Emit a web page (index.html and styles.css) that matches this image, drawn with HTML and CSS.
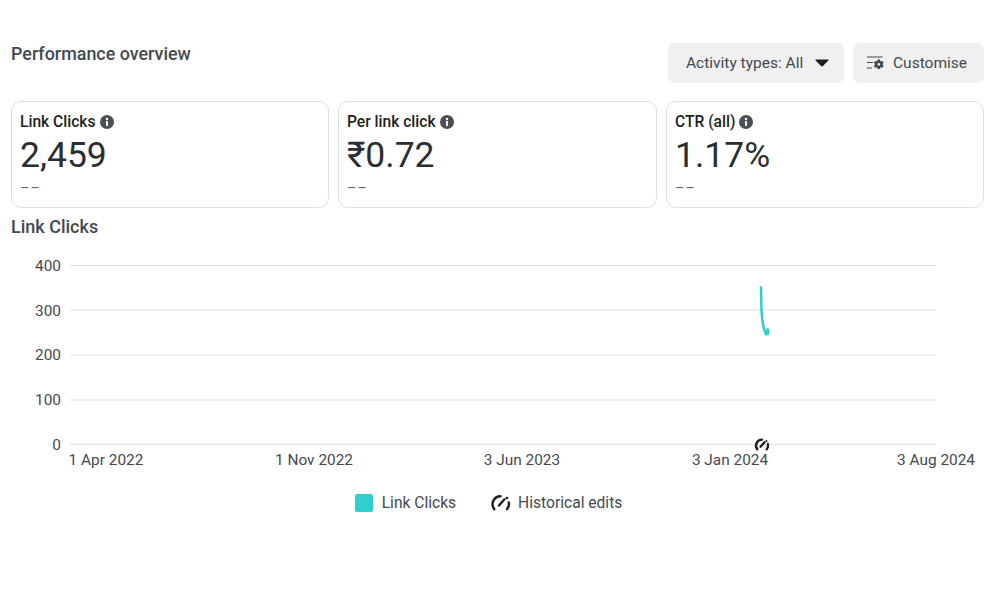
FILE: index.html
```html
<!DOCTYPE html>
<html lang="en">
<head>
<meta charset="utf-8">
<title>Performance overview</title>
<link rel="stylesheet" href="styles.css">
</head>
<body>
<main class="page">
  <header class="top">
    <h1 class="title">Performance overview</h1>
    <div class="actions">
      <button class="btn btn-activity">Activity types: All<svg class="caret" width="14" height="8" viewBox="0 0 14 8"><path d="M1 .6h12c.5 0 .8.6.4 1L8 7c-.6.6-1.4.6-2 0L.6 1.600C.2 1.200.5.600 1 .600z"/></svg></button>
      <button class="btn btn-custom"><svg class="cust-icon" width="18" height="14" viewBox="0 0 18 14"><path class="cust-line" d="M0 1h15.500M0 6.500h6M0 12h5"/><path class="cust-gear" d="M10.600 3.500h2.400l.3 1.400 1 .5 1.300-.5 1.100 1.900-1 .9v1.200l1 .9-1.100 1.900-1.300-.5-1 .5-.3 1.400h-2.400l-.3-1.400-1-.5-1.300.5-1.100-1.900 1-.9V7.700l-1-.9 1.100-1.900 1.300.5 1-.5zM11.800 7a1.300 1.300 0 1 0 0 2.700 1.300 1.300 0 0 0 0-2.700z"/></svg>Customise</button>
    </div>
  </header>

  <section class="cards">
    <article class="card">
      <div class="label">Link Clicks<svg class="info" width="14" height="14" viewBox="0 0 14 14"><circle cx="7" cy="7" r="7"/><rect class="info-mark" x="6" y="6" width="2" height="5" rx=".5"/><circle class="info-mark" cx="7" cy="4" r="1.200"/></svg></div>
      <div class="value">2,459</div>
      <div class="delta">&#8211;&#8211;</div>
    </article>
    <article class="card">
      <div class="label">Per link click<svg class="info" width="14" height="14" viewBox="0 0 14 14"><circle cx="7" cy="7" r="7"/><rect class="info-mark" x="6" y="6" width="2" height="5" rx=".5"/><circle class="info-mark" cx="7" cy="4" r="1.200"/></svg></div>
      <div class="value">₹0.72</div>
      <div class="delta">&#8211;&#8211;</div>
    </article>
    <article class="card">
      <div class="label">CTR (all)<svg class="info" width="14" height="14" viewBox="0 0 14 14"><circle cx="7" cy="7" r="7"/><rect class="info-mark" x="6" y="6" width="2" height="5" rx=".5"/><circle class="info-mark" cx="7" cy="4" r="1.200"/></svg></div>
      <div class="value">1.17%</div>
      <div class="delta">&#8211;&#8211;</div>
    </article>
  </section>

  <h2 class="chart-title">Link Clicks</h2>

  <svg class="chart" width="973" height="240" viewBox="11 240 973 240">
    <g class="grid">
      <path d="M70 265.500H936M70 310H936M70 355H936M70 400H936M70 444.500H936"/>
    </g>
    <g class="y-labels">
      <text x="61" y="271">400</text>
      <text x="61" y="316">300</text>
      <text x="61" y="360">200</text>
      <text x="61" y="405">100</text>
      <text x="61" y="450">0</text>
    </g>
    <g class="x-labels">
      <text x="106" y="465">1 Apr 2022</text>
      <text x="314" y="465">1 Nov 2022</text>
      <text x="522" y="465">3 Jun 2023</text>
      <text x="730" y="465">3 Jan 2024</text>
      <text x="936" y="465">3 Aug 2024</text>
    </g>
    <path class="line" d="M761 287.500L761.500 310C762 322 764 330 766 334L766.500 333.500"/>
    <path class="line" d="M766 334L768 328.500L768 334"/>
    <g class="edit" transform="translate(755 438)">
      <path d="M2.300 11.300A6 6 0 0 1 7 1.600"/>
      <path d="M12.800 5.900A6 6 0 0 1 11.700 11.300"/>
      <path d="M5.500 8.700L9.500 4.200"/>
      <circle cx="11.500" cy="2.900" r="1"/>
    </g>
  </svg>

  <div class="legend">
    <span class="legend-item"><span class="swatch"></span>Link Clicks</span>
    <span class="legend-item legend-edits"><svg class="edit-icon" width="20" height="18" viewBox="0 0 20 18"><path d="M3.300 15.200A8 8 0 0 1 9.500 2.200"/><path d="M17.800 8.500A8 8 0 0 1 16 15.200"/><path d="M8 11.500L13.500 5.200"/><circle cx="16" cy="4" r="1.300"/></svg>Historical edits</span>
  </div>
</main>
</body>
</html>
```

FILE: styles.css
```css
* { box-sizing: border-box; }

body {
  margin: 0;
  background: #fff;
  font-family: Roboto, "Liberation Sans", sans-serif;
  color: #444950;
}

.page {
  width: 1000px;
  height: 600px;
  padding: 43px 16px 0 11px;
  overflow: hidden;
}

.top {
  display: flex;
  justify-content: space-between;
  align-items: flex-start;
  height: 40px;
  margin-bottom: 18px;
}

.title {
  margin: 1px 0 0;
  font-size: 17.900px;
  line-height: 20px;
  font-weight: 500;
  color: #444950;
}

.actions {
  display: flex;
  gap: 9px;
}

.btn {
  display: flex;
  align-items: center;
  height: 40px;
  border: 0;
  border-radius: 7px;
  background: #f0f0f0;
  color: #444950;
  font-family: inherit;
  font-size: 15.500px;
}

.btn-activity {
  width: 176px;
  padding: 0 0 0 18px;
}

.caret {
  margin-left: 12px;
  fill: #1c1e21;
}

.btn-custom {
  width: 131px;
  padding: 0 0 0 14px;
}

.cust-icon {
  margin-right: 8px;
}

.cust-line {
  fill: none;
  stroke: #444950;
  stroke-width: 1.100;
}

.cust-gear {
  fill: #444950;
  fill-rule: evenodd;
}

.cards {
  display: grid;
  grid-template-columns: 318px 319px 318px;
  gap: 9px;
}

.card {
  height: 107px;
  padding: 10px 8px 0;
  border: 1px solid #dddfe2;
  border-radius: 10px;
  background: #fff;
}

.label {
  display: flex;
  align-items: center;
  gap: 4px;
  font-size: 15.600px;
  line-height: 20px;
  font-weight: 500;
  color: #1c1e21;
}

.info {
  fill: #4b4f56;
}

.info .info-mark {
  fill: #fff;
}

.value {
  margin-top: 2px;
  font-size: 35.500px;
  line-height: 42px;
  font-weight: 400;
  color: #2b2d31;
}

.delta {
  margin-top: 2px;
  font-size: 14px;
  line-height: 20px;
  letter-spacing: 1.300px;
  color: #606770;
}

.chart-title {
  margin: 9px 0 0;
  font-size: 18px;
  line-height: 20px;
  font-weight: 500;
  color: #444950;
}

.chart {
  display: block;
  margin-top: 3px;
}

.grid path {
  fill: none;
  stroke: #dddfe2;
  stroke-width: 1;
}

.y-labels text,
.x-labels text {
  font-size: 15.400px;
  fill: #444950;
}

.y-labels text {
  text-anchor: end;
}

.x-labels text {
  text-anchor: middle;
}

.line {
  fill: none;
  stroke: #2fcfcd;
  stroke-width: 2.500;
  stroke-linecap: round;
}

.edit path {
  fill: none;
  stroke: #1c1e21;
  stroke-width: 2.400;
  stroke-linecap: round;
}

.edit circle {
  fill: #1c1e21;
}

.legend {
  display: flex;
  justify-content: center;
  align-items: center;
  gap: 35px;
  height: 25px;
  margin-top: 10px;
  padding-right: 18px;
  font-size: 15.600px;
  color: #444950;
}

.legend-item {
  display: flex;
  align-items: center;
}

.swatch {
  width: 18px;
  height: 18px;
  margin-right: 9px;
  border-radius: 2px;
  background: #2fcfcd;
}

.edit-icon {
  margin-right: 7px;
}

.edit-icon path {
  fill: none;
  stroke: #1c1e21;
  stroke-width: 2.400;
  stroke-linecap: round;
}

.edit-icon circle {
  fill: #1c1e21;
}
```
